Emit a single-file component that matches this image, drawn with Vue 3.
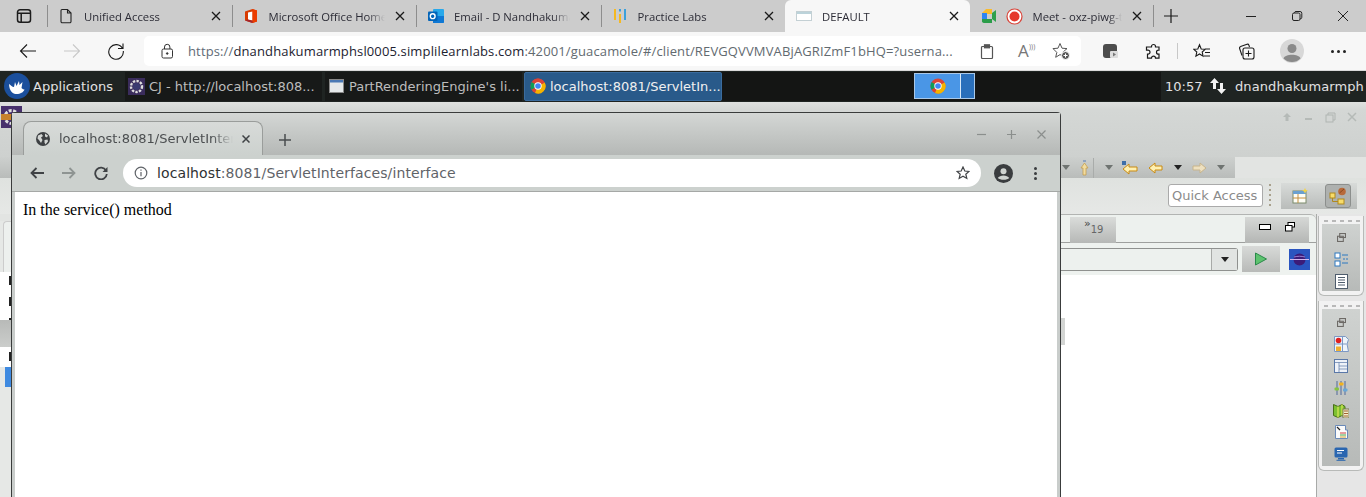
<script setup>
const edgeTabs = [
  { id: 'page', title: 'Unified Access' },
  { id: 'office', title: 'Microsoft Office Home' },
  { id: 'outlook', title: 'Email - D Nandhakumar' },
  { id: 'labs', title: 'Practice Labs' },
  { id: 'blank', title: 'DEFAULT', active: true },
  { id: 'meet', title: 'Meet - oxz-piwg-tqb' }
]
const sideIcons = ['restore', 'persons', 'table', 'sliders', 'map', 'tree', 'monitor']
</script>

<template>
  <div class="screen">
    <div class="edge-tabs">
      <div class="side-btn">
        <svg width="16" height="16" viewBox="0 0 16 16" fill="none" stroke="#1c1c1c" stroke-width="1.5"><rect x="1.5" y="1.8" width="13" height="12.4" rx="2.5"/><path d="M1.5 5.2h13M5.2 5.2v9" /></svg>
      </div>
      <div v-for="t in edgeTabs" :key="t.id" class="etab" :class="{ active: t.active, wide: t.id === 'meet' }">
        <svg v-if="t.id === 'page'" class="ticon" width="16" height="16" viewBox="0 0 16 16" fill="none" stroke="#222" stroke-width="1.1"><path d="M3 2.5a1 1 0 0 1 1-1h5.5L13 5v8.5a1.2 1.2 0 0 1-1.2 1.2H4.2A1.2 1.2 0 0 1 3 13.5zM9.5 1.5V5H13"/></svg>
        <svg v-else-if="t.id === 'office'" class="ticon" width="16" height="16" viewBox="0 0 16 16"><path d="M2 3.5 9.5 1 14 2.5v11L9.5 15 2 12.5z" fill="#d83b01"/><path d="M5 4.5 9.5 3.5v9L5 11.5z" fill="#fff"/><path d="M9.5 1 14 2.5v11L9.5 15z" fill="#eb3c00"/><path d="M2 12.5 9.5 15v-2.3L4.5 11.5z" fill="#a4262c"/></svg>
        <svg v-else-if="t.id === 'outlook'" class="ticon" width="17" height="16" viewBox="0 0 17 16"><rect x="6" y="1" width="11" height="14" rx="1" fill="#28a8ea"/><path d="M6 8h11v6a1 1 0 0 1-1 1H6z" fill="#0f78d4"/><rect x="1" y="3.5" width="9.5" height="9.5" rx="1" fill="#0364b8"/><circle cx="5.7" cy="8.2" r="2.4" fill="none" stroke="#fff" stroke-width="1.4"/></svg>
        <svg v-else-if="t.id === 'labs'" class="ticon" width="16" height="16" viewBox="0 0 16 16"><rect x="2" y="1" width="2" height="11" fill="#f5b921"/><rect x="7" y="6" width="2" height="9" fill="#f5b921"/><rect x="7" y="1" width="2" height="2.5" fill="#3aa0dc"/><rect x="12" y="1" width="2" height="11" fill="#3aa0dc"/></svg>
        <svg v-else-if="t.id === 'blank'" class="ticon" width="16" height="16" viewBox="0 0 16 16"><rect x="0.5" y="3.5" width="15" height="9" fill="#fff" stroke="#c4d0d4"/><rect x="1" y="4" width="14" height="2" fill="#bcd3da"/></svg>
        <template v-else>
          <svg class="ticon" width="16" height="16" viewBox="0 0 16 16"><path d="M1 5 5 1h6v5H1z" fill="#f9bb2e"/><path d="M1 5v6h5V5z" fill="#2e84f3"/><path d="M1 11v1.5A2 2 0 0 0 3 15h8v-4z" fill="#2b9d49"/><path d="M11 5l4-3v12l-4-3z" fill="#2fa04d"/></svg>
          <svg class="rec" width="17" height="17" viewBox="0 0 17 17"><circle cx="8.5" cy="8.5" r="7.5" fill="#fff" stroke="#d9453a" stroke-width="1.2"/><circle cx="8.5" cy="8.5" r="5" fill="#e5382c"/></svg>
        </template>
        <span class="ttitle">{{ t.title }}</span>
        <svg class="tclose" width="10" height="10" viewBox="0 0 10 10" stroke="#1a1a1a" stroke-width="1.3"><path d="M1 1l8 8M9 1l-8 8"/></svg>
      </div>
      <div class="plus">
        <svg width="16" height="16" viewBox="0 0 16 16" stroke="#1a1a1a" stroke-width="1.2"><path d="M8 1v14M1 8h14"/></svg>
      </div>
      <div class="win-ctrl">
        <svg width="12" height="12" viewBox="0 0 12 12" stroke="#222"><path d="M1 6.5h10"/></svg>
        <svg width="12" height="12" viewBox="0 0 12 12" fill="none" stroke="#222"><rect x="1.5" y="3" width="7.5" height="7.5" rx="1.5"/><path d="M3.5 3V2.7A1.5 1.5 0 0 1 5 1.5h4A1.8 1.8 0 0 1 10.8 3.3v4A1.5 1.5 0 0 1 9.3 8.8H9"/></svg>
        <svg width="12" height="12" viewBox="0 0 12 12" stroke="#222"><path d="M1 1l10 10M11 1 1 11"/></svg>
      </div>
    </div>

    <div class="edge-bar">
      <div class="nav">
        <svg width="18" height="16" viewBox="0 0 18 16" fill="none" stroke="#1a1a1a" stroke-width="1.1"><path d="M17 8H1.5M8 1.5 1.5 8 8 14.5"/></svg>
        <svg width="18" height="16" viewBox="0 0 18 16" fill="none" stroke="#c8c8c8" stroke-width="1.1"><path d="M1 8h15.5M10 1.5 16.5 8 10 14.5"/></svg>
        <svg width="18" height="18" viewBox="0 0 18 18" fill="none" stroke="#1a1a1a" stroke-width="1.1"><path d="M15.5 6.5A7.3 7.3 0 1 0 16.3 9M16 1.5v5h-5"/></svg>
      </div>
      <div class="omni">
        <svg width="14" height="16" viewBox="0 0 14 16" fill="none" stroke="#333"><rect x="2" y="6" width="10.5" height="9" rx="1.5"/><path d="M4.5 6V4a2.7 2.7 0 0 1 5.4 0v2"/><circle cx="7.2" cy="10.5" r="0.8" fill="#333"/></svg>
        <span class="url"><span class="g1">https://</span><span class="h1">dnandhakumarmphsl0005.simplilearnlabs.com</span>:42001/guacamole/#/client/REVGQVVMVABjAGRIZmF1bHQ=?userna...</span>
        <div class="omni-icons">
          <svg width="14" height="15" viewBox="0 0 14 15" fill="none" stroke="#555" stroke-width="1.2"><rect x="1.5" y="2.5" width="11" height="12" rx="1"/><rect x="4.5" y="0.8" width="5" height="3" fill="#555"/></svg>
          <span class="read">A<i>)))</i></span>
          <svg class="star-plus" width="18" height="18" viewBox="0 0 18 18" fill="none" stroke="#555"><path d="M8 1.5l2 4.7 5 .4-3.8 3.3 1.1 4.9L8 12.6l-4.3 2.7 1.1-4.9L1 6.6l5-.4z"/><circle cx="13.5" cy="13.5" r="4" fill="#555" stroke="#fff"/><path d="M13.5 11.5v4M11.5 13.5h4" stroke="#fff"/></svg>
        </div>
      </div>
      <div class="edge-tools">
        <svg width="16" height="16" viewBox="0 0 16 16"><rect x="1" y="1" width="14" height="14" rx="3" fill="#4d4d4d"/><rect x="8" y="8" width="8" height="7" rx="1" fill="#ddd"/><path d="M11 9.5v4l3-2z" fill="#777"/></svg>
        <svg class="gap-a" width="17" height="17" viewBox="0 0 17 17" fill="none" stroke="#1a1a1a" stroke-width="1.2"><path d="M6.5 3.5a2 2 0 0 1 4 0V4H14v3.2h-.5a2 2 0 0 0 0 4h.5v4H10.5a2 2 0 0 0-4 0H2.5v-4H3a2 2 0 0 0 0-4H1.5V4h5z"/></svg>
        <i class="tsep"></i>
        <svg class="gap-b" width="18" height="17" viewBox="0 0 18 17" fill="none" stroke="#1a1a1a" stroke-width="1.1"><path d="M6.5 1.8 8.2 6l4 .3-3 2.7.9 4.2L6.5 11l-3.6 2.2.9-4.2-3-2.7 4-.3zM12 6h5M12 9.5h5M11 13h6"/></svg>
        <svg class="gap-c" width="17" height="17" viewBox="0 0 17 17" fill="none" stroke="#1a1a1a" stroke-width="1.1"><path d="M4 12.5 1.6 5.5a1.5 1.5 0 0 1 1-1.900L9 1.300a1.5 1.5 0 0 1 1.9.9l.6 1.8"/><rect x="5" y="5" width="11" height="11" rx="2"/><path d="M10.5 7.5v6M7.5 10.5h6"/></svg>
        <svg class="gap-d" width="24" height="24" viewBox="0 0 24 24"><circle cx="12" cy="12" r="12" fill="#d8d8d8"/><circle cx="12" cy="9.5" r="4.5" fill="#8a8a8a"/><path d="M3.5 19.5c1.5-5 15.5-5 17 0A12 12 0 0 1 3.5 19.5z" fill="#8a8a8a"/></svg>
        <span class="dots"><i></i><i></i><i></i></span>
      </div>
    </div>

    <div class="panel">
      <div class="apps">
        <svg width="26" height="26" viewBox="0 0 26 26"><circle cx="13" cy="13" r="13" fill="#1b4f9c"/><path d="M5 11c2 1 3 3 5 3l1-5 1.5 4 2.500-5 .5 4 3-3-1 6c1 1 2 1.500 3 1.500-1 3-5 5-9 4.500-3-.4-6-3-6.500-9.500z" fill="#fff"/></svg>
        <span>Applications</span>
      </div>
      <div class="task task-a">
        <svg width="17" height="17" viewBox="0 0 17 17"><rect width="17" height="17" fill="#3a2c5c"/><circle cx="8.5" cy="8.5" r="5.5" fill="none" stroke="#ddd" stroke-width="2.4" stroke-dasharray="2.4 1.2"/><circle cx="8.5" cy="8.5" r="3.6" fill="#3a3a70"/></svg>
        <span>CJ - http://localhost:808...</span>
      </div>
      <div class="task task-b">
        <svg width="15" height="14" viewBox="0 0 15 14"><rect width="14" height="13" x="0.5" y="0.5" fill="#e5e8ea" stroke="#888"/><rect x="1" y="1" width="13" height="2.5" fill="#4a78b4"/></svg>
        <span>PartRenderingEngine's li...</span>
      </div>
      <div class="task task-c">
        <svg width="16" height="16" viewBox="0 0 16 16"><circle cx="8" cy="8" r="7.5" fill="#db4437"/><path d="M8 8 1.5 11.7A7.5 7.5 0 0 1 1.7 4z" fill="#0f9d58"/><path d="M8 8 14.7 4.6A7.5 7.5 0 0 1 5 15z" fill="#f4b400"/><path d="M8 8l6.7-3.4A7.5 7.5 0 0 0 3 2.5z" fill="#db4437"/><circle cx="8" cy="8" r="3.7" fill="#fff"/><circle cx="8" cy="8" r="2.8" fill="#4285f4"/></svg>
        <span>localhost:8081/ServletIn...</span>
      </div>
      <div class="dock-gap">
        <div class="switcher">
          <div class="sw-main">
            <svg width="16" height="16" viewBox="0 0 16 16"><circle cx="8" cy="8" r="7.5" fill="#db4437"/><path d="M8 8 1.5 11.7A7.5 7.5 0 0 1 1.7 4z" fill="#0f9d58"/><path d="M8 8 14.7 4.6A7.5 7.5 0 0 1 5 15z" fill="#f4b400"/><circle cx="8" cy="8" r="3.7" fill="#fff"/><circle cx="8" cy="8" r="2.8" fill="#4285f4"/></svg>
          </div>
          <div class="sw-side"></div>
        </div>
      </div>
      <div class="clock">10:57</div>
      <svg class="updown" width="18" height="18" viewBox="0 0 18 18" fill="#f2f2f2"><path d="M5.5 1 1 6h3v6h3V6h3zM12.5 17 8 12h3V6h3v6h3z"/></svg>
      <div class="user">dnandhakumarmph</div>
    </div>

    <div class="desktop">
      <div class="eclipse">
        <div class="ec-title">
          <svg width="10" height="10" viewBox="0 0 10 10" fill="#b5bab7"><path d="M5 1 1 5h2.5v4h3V5H9z"/></svg>
          <i class="ec-min"></i>
          <svg width="11" height="11" viewBox="0 0 11 11" fill="none" stroke="#b0b5b2"><rect x="1" y="3" width="7" height="7"/><path d="M3 3V1h7v7H8"/></svg>
          <svg width="10" height="10" viewBox="0 0 10 10" stroke="#b5bab7" stroke-width="1.5"><path d="M1 1l8 8M9 1 1 9"/></svg>
        </div>
        <div class="ec-tools">
          <i class="tri dim"></i>
          <svg class="gap0" width="9" height="16" viewBox="0 0 9 16"><path d="M4.5 3 8 8H6v7H3V8H1z" fill="#f1dca0" stroke="#c39a44" stroke-width="0.7"/><rect x="3" y="0" width="3" height="2" fill="#8fa4c0"/></svg>
          <i class="tool-sep"></i>
          <i class="tri dim gap1"></i>
          <svg class="gap2" width="16" height="14" viewBox="0 0 16 14"><path d="M1 8l6-5v3h8v4H7v3z" fill="#fff0b0" stroke="#c98a12"/><rect x="0" y="0" width="4" height="4" fill="#3d6ea8"/></svg>
          <svg class="gap3" width="15" height="12" viewBox="0 0 15 12"><path d="M1 6l6-5v3h7v4H7v3z" fill="#fff0b0" stroke="#c98a12"/></svg>
          <i class="tri gap4"></i>
          <svg class="gap5" width="15" height="12" viewBox="0 0 15 12"><path d="M14 6 8 1v3H1v4h7v3z" fill="#eee0bf" stroke="#c7b48c"/></svg>
          <i class="tri dim gap5"></i>
        </div>
        <div class="ec-quick">
          <div class="quick">Quick Access</div>
          <i class="grip"></i>
          <div class="persp">
            <span class="p-cell">
              <svg width="16" height="16" viewBox="0 0 16 16"><rect x="1" y="3" width="13" height="12" fill="#fdfdf5" stroke="#7a8a6a"/><rect x="1" y="3" width="13" height="3" fill="#6aa0d0"/><path d="M6 6v9M1 10h13" stroke="#c58f3e"/><path d="M13 0l1 2 2 .5-2 1-1 2-1-2-2-1 2-.5z" fill="#f3d34a"/></svg>
            </span>
            <span class="p-cell on">
              <svg width="18" height="18" viewBox="0 0 18 18" fill="none"><rect x="1" y="6" width="5" height="5" fill="#f7dc6b" stroke="#b08a1e"/><rect x="9" y="12" width="6" height="5" fill="#f7dc6b" stroke="#b08a1e"/><path d="M3.5 11v3.5H9" stroke="#b08a1e"/><circle cx="13" cy="4.5" r="3.8" fill="#b86a3a"/><path d="M10.5 6 15 2" stroke="#8a4a20"/></svg>
            </span>
          </div>
        </div>
        <div class="ec-body">
          <div class="ec-left">
            <div class="ec-pane-head">
              <div class="chev">»<sub>19</sub></div>
              <div class="pane-btns">
                <i class="pb-min"></i>
                <svg width="10" height="10" viewBox="0 0 10 10" fill="#fff" stroke="#000"><rect x="3" y="0.5" width="6.5" height="4.5"/><rect x="0.5" y="3.5" width="6.5" height="5.5"/></svg>
              </div>
            </div>
            <div class="ec-url">
              <div class="combo"><span class="combo-btn"><i class="tri dark"></i></span></div>
              <div class="run"><svg width="14" height="14" viewBox="0 0 14 14"><path d="M1.5 1v12l11-6z" fill="#5ec26f" stroke="#2a8a4a"/></svg></div>
              <div class="globe"><svg width="21" height="21" viewBox="0 0 21 21"><rect width="21" height="21" fill="#2a55c0"/><circle cx="10.5" cy="10.5" r="6" fill="#3c1c78"/><path d="M1 10.5h19" stroke="#d0b8f0"/><path d="M5 8c4-1 7-1 11 0" stroke="#9a80d0" fill="none"/></svg></div>
            </div>
            <div class="ec-white"><i class="smudge"></i></div>
          </div>
          <div class="ec-trim">
            <div class="stack s1">
              <div class="dash"></div>
              <div class="stack-in">
                <span class="cell"><svg width="9" height="9" viewBox="0 0 10 10" fill="none" stroke="#6d6a66" stroke-width="1.2"><rect x="3" y="0.6" width="6.4" height="4.4"/><rect x="0.6" y="3.6" width="6.4" height="5.8"/></svg></span>
                <span class="cell"><svg width="15" height="15" viewBox="0 0 15 15" fill="none" stroke="#2d78c0"><rect x="1" y="1" width="5" height="5" fill="#fff"/><rect x="1" y="9" width="5" height="5" fill="#fff"/><path d="M8 3h6M8 11h6M9 7h2M12 7h2"/></svg></span>
                <span class="cell"><svg width="13" height="15" viewBox="0 0 13 15" fill="#fff" stroke="#4e5c6c"><rect x="0.5" y="0.5" width="12" height="14"/><path d="M3 3.5h7M3 6h7M3 8.5h7M3 11h7"/></svg></span>
              </div>
            </div>
            <div class="stack s2">
              <div class="dash"></div>
              <div class="stack-in">
                <span v-for="s in sideIcons" :key="s" class="cell">
                  <svg v-if="s === 'restore'" width="9" height="9" viewBox="0 0 10 10" fill="none" stroke="#6d6a66" stroke-width="1.2"><rect x="3" y="0.6" width="6.4" height="4.4"/><rect x="0.6" y="3.6" width="6.4" height="5.8"/></svg>
                  <svg v-else-if="s === 'persons'" width="15" height="16" viewBox="0 0 15 16"><path d="M0.5 0.5h11l3 3-1.5 4.5 1.5 7.5H0.5z" fill="#eef4fa" stroke="#7c98c4"/><path d="M0.5 8h12M8.5 0.5v15" stroke="#7c98c4"/><circle cx="4.5" cy="4.5" r="2.8" fill="#e02020"/><rect x="2" y="10.5" width="5" height="4.5" fill="#f0b030"/></svg>
                  <svg v-else-if="s === 'table'" width="14" height="14" viewBox="0 0 14 14" fill="#eef2f8" stroke="#5a78a8"><rect x="0.5" y="0.5" width="13" height="13"/><path d="M0.5 3.5h13M5 3.5v10M5 7h8.5M5 10h8.5" stroke-width="0.7"/></svg>
                  <svg v-else-if="s === 'sliders'" width="14" height="14" viewBox="0 0 14 14"><path d="M3 0v14M7 0v14M11 0v14" stroke="#50689a"/><rect x="0.5" y="6.5" width="4.5" height="3" rx="1" fill="#86c440"/><rect x="5" y="1.5" width="4.5" height="3" rx="1" fill="#f2b21e"/><rect x="9" y="7.5" width="4.5" height="3" rx="1" fill="#68a8d8"/></svg>
                  <svg v-else-if="s === 'map'" width="16" height="15" viewBox="0 0 16 15"><path d="M0.5 1.5 5 3.5 9 1.5l3 2v11l-3-2-4 2-4.5-2z" fill="#7cc030" stroke="#486e18"/><path d="M5 3.5v11M9 1.5v11" stroke="#f0f060"/><rect x="10" y="6" width="6" height="9" fill="#f4f0d0" stroke="#7a7a50"/><path d="M11 8h4M11 10.5h4M11 13h4" stroke="#a06030"/></svg>
                  <svg v-else-if="s === 'tree'" width="13" height="14" viewBox="0 0 13 14"><path d="M0.5 0.5H10.5V5H12.5V13.5H0.5z" fill="#fbfbfb" stroke="#6a8ab8"/><path d="M2 2l3 3" stroke="#222" stroke-width="1.3"/><path d="M5 8h6" stroke="#d04040"/><path d="M5 10h6" stroke="#48a848"/><path d="M5 12h6" stroke="#d8a030"/></svg>
                  <svg v-else width="14" height="14" viewBox="0 0 14 14"><rect x="0.5" y="0.5" width="13" height="10" rx="1.5" fill="#2a66b0"/><path d="M3 3.5h7M3 6h5" stroke="#fff"/><rect x="4" y="11" width="6" height="1.5" fill="#2a66b0"/><rect x="2.5" y="12.8" width="9" height="1" fill="#2a66b0"/></svg>
                </span>
              </div>
            </div>
          </div>
        </div>
      </div>

      <svg class="bg-gear" width="21" height="22" viewBox="0 0 21 22"><rect width="21" height="22" fill="#47306c"/><circle cx="10.5" cy="11" r="6.5" fill="none" stroke="#e0e0e0" stroke-width="3" stroke-dasharray="3 1.5"/><rect x="0" y="8" width="11" height="6" fill="#c8822c"/></svg>
      <div class="left-strip">
        <i class="ls-tab"></i>
        <div class="ls-white"><i></i><i></i><i></i></div>
        <div class="ls-gray"></div>
        <div class="ls-white short"><i></i></div>
        <div class="ls-blue"></div>
      </div>

      <div class="chrome">
        <div class="c-strip">
          <div class="c-tab">
            <svg width="14" height="14" viewBox="0 0 14 14"><circle cx="7" cy="7" r="7" fill="#3d4043"/><path d="M2 3.5 5.5 2 7 4 5 5.5 6.5 8 5 11 3 8 1.5 6.5zM9 1.5l3 2-1 2-2-1zM8.5 8l3-.5.5 2-2.5 3-1-2z" fill="#d3d6d4"/></svg>
            <span class="c-title">localhost:8081/ServletInterfaces/interface</span>
            <svg width="8" height="8" viewBox="0 0 8 8" stroke="#3f4245" stroke-width="1.5"><path d="M0.5 0.5l7 7M7.5 0.5l-7 7"/></svg>
          </div>
          <svg class="c-plus" width="12" height="12" viewBox="0 0 12 12" stroke="#4a4d4f" stroke-width="1.5"><path d="M6 0v12M0 6h12"/></svg>
          <div class="c-win">
            <svg width="9" height="9" viewBox="0 0 9 9" stroke="#8b8f8d" stroke-width="1.2"><path d="M0 4.5h9"/></svg>
            <svg width="9" height="9" viewBox="0 0 9 9" stroke="#8b8f8d" stroke-width="1.2"><path d="M0 4.5h9M4.5 0v9"/></svg>
            <svg width="9" height="9" viewBox="0 0 9 9" stroke="#8b8f8d" stroke-width="1.2"><path d="M0.5 0.5l8 8M8.5 0.5l-8 8"/></svg>
          </div>
        </div>
        <div class="c-bar">
          <div class="c-nav">
            <svg width="14" height="12" viewBox="0 0 14 12" fill="none" stroke="#3f4245" stroke-width="1.8"><path d="M14 6H1.5M6.5 1 1.5 6l5 5"/></svg>
            <svg width="14" height="12" viewBox="0 0 14 12" fill="none" stroke="#8e9492" stroke-width="1.8"><path d="M0 6h12.5M7.5 1l5 5-5 5"/></svg>
            <svg width="14" height="14" viewBox="0 0 14 14" fill="none" stroke="#3f4245" stroke-width="1.8"><path d="M12 4.5A5.8 5.8 0 1 0 12.8 8"/><path d="M13.5 1v5h-5z" fill="#3f4245" stroke="none"/></svg>
          </div>
          <div class="c-omni">
            <svg width="14" height="14" viewBox="0 0 14 14" fill="none" stroke="#5f6368" stroke-width="1.2"><circle cx="7" cy="7" r="5.8"/><path d="M7 6v4.3M7 3.5v1.3"/></svg>
            <span class="c-url"><b>localhost</b>:8081/ServletInterfaces/interface</span>
            <svg class="c-star" width="14" height="14" viewBox="0 0 14 14" fill="none" stroke="#3f4245" stroke-width="1.2"><path d="M7 1l1.8 4 4.2.4-3.2 2.8 1 4.2L7 10.2l-3.8 2.2 1-4.2L1 5.4 5.2 5z"/></svg>
          </div>
          <svg class="c-avatar" width="19" height="19" viewBox="0 0 19 19"><circle cx="9.5" cy="9.5" r="9.5" fill="#3a3d3f"/><circle cx="9.5" cy="7.3" r="3" fill="#cfd4d1"/><path d="M3.8 14c2-3.4 9.4-3.4 11.4 0-2 2.4-9 2.4-11.4 0z" fill="#cfd4d1"/></svg>
          <span class="c-dots"><i></i><i></i><i></i></span>
        </div>
        <div class="c-page">In the service() method</div>
      </div>
    </div>
  </div>
</template>

<style>
html, body { margin: 0; background: #e4e6e4; overflow: hidden; }
</style>

<style scoped>
.screen { width: 1366px; height: 497px; overflow: hidden; display: flex; flex-direction: column; font-family: "Open Sans", "Noto Sans", sans-serif; }
svg { flex: none; display: block; }

.edge-tabs { height: 32px; background: #cccccc; display: flex; align-items: center; flex: none; }
.side-btn { width: 47px; display: flex; justify-content: center; }
.etab { width: 184.5px; height: 22px; box-sizing: border-box; padding: 0 8px 0 10px; border-left: 1px solid #8d8d8d; display: flex; align-items: center; gap: 10px; font-size: 11.3px; color: #2c2c36; position: relative; }
.etab.active { height: 32px; align-self: flex-end; background: #f7f7f7; border-left: 0; border-radius: 6px 6px 0 0; padding-left: 11px; }
.etab.active + .etab { border-left-color: transparent; }
.etab.wide .rec { margin-left: -1px; }
.etab.wide { gap: 10px; width: 183px; }
.ttitle { flex: 1; min-width: 0; white-space: nowrap; overflow: hidden; -webkit-mask-image: linear-gradient(to right, #000 85%, transparent 100%); mask-image: linear-gradient(to right, #000 85%, transparent 100%); }
.tclose { flex: none; margin-right: 3px; }
.plus { width: 36px; height: 22px; box-sizing: border-box; border-left: 1px solid #8d8d8d; display: flex; justify-content: center; align-items: center; }
.win-ctrl { margin-left: auto; display: flex; gap: 34px; padding-right: 17px; }

.edge-bar { height: 39px; background: #f7f7f7; display: flex; align-items: center; flex: none; border-bottom: 1px solid #dadada; box-sizing: border-box; }
.nav { width: 144px; box-sizing: border-box; padding-left: 19px; display: flex; gap: 26px; align-items: center; }
.omni { width: 937px; height: 30px; background: #fff; border-radius: 5px; display: flex; align-items: center; box-sizing: border-box; padding-left: 16px; position: relative; }
.url { margin-left: 14px; font-size: 13px; color: #626a70; white-space: nowrap; letter-spacing: 0.135px; }
.g1 { color: #5f6b76; }
.h1 { color: #1c2230; }
.omni-icons { margin-left: auto; display: flex; align-items: center; padding-right: 11px; }
.read { font-size: 17px; color: #777; display: inline-flex; width: 16px; position: relative; margin-left: 24px; line-height: 18px; }
.read i { font-size: 7px; font-style: normal; position: absolute; left: 11px; top: 0; line-height: 10px; }
.star-plus { margin-left: 18px; }
.edge-tools { flex: 1; display: flex; align-items: center; padding-left: 21px; position: relative; }
.gap-a { margin-left: 27px; }
.tsep { width: 1px; height: 16px; background: #c8c8c8; margin-left: 15px; }
.gap-b { margin-left: 15px; }
.gap-c { margin-left: 27px; }
.gap-d { margin-left: 25px; }
.dots { display: flex; gap: 3px; margin-left: 27px; }
.dots i { width: 3px; height: 3px; border-radius: 50%; background: #222; }

.panel { height: 31px; background: #1f2422; display: flex; align-items: center; flex: none; color: #e2e2e2; font-family: "DejaVu Sans", sans-serif; font-size: 13px; white-space: nowrap; box-sizing: border-box; padding-bottom: 1px; }
.apps { width: 124px; box-sizing: border-box; padding-left: 4px; display: flex; align-items: center; gap: 3px; letter-spacing: 0.05px; }
.task { height: 29px; display: flex; align-items: center; gap: 4px; box-sizing: border-box; background: #171918; color: #bdbdbd; }
.task-a { width: 197px; padding-left: 3px; margin-left: 1px; }
.task-b { width: 197px; padding-left: 4px; margin-left: 3px; gap: 5px; }
.task-c { width: 198px; padding-left: 5px; margin-left: 2px; background: #295a8a; color: #f0f0f0; border: 1px solid #3b6c9e; border-radius: 2px; }
.dock-gap { width: 439px; height: 29px; background: #141514; display: flex; padding-left: 192px; box-sizing: border-box; }
.switcher { width: 61px; height: 26px; display: flex; border: 1px solid #a9c8e8; box-sizing: border-box; background: #2a6fbb; margin-top: 1px; }
.sw-main { width: 45px; background: #4a96e6; border-right: 1px solid #d7e8f8; display: flex; align-items: center; justify-content: center; box-sizing: content-box; }
.sw-side { flex: 1; background: #2a6fbb; }
.clock { margin-left: 4px; width: 44px; }
.updown { margin-right: 8px; }
.user { letter-spacing: 0.1px; }

.desktop { flex: 1; position: relative; overflow: hidden; background: #e2e4e2; }
.eclipse { height: 100%; display: flex; flex-direction: column; }
.ec-title { height: 55px; flex: none; background: linear-gradient(#dfe1df 0, #d4d7d5 8px, #ced1cf 100%); display: flex; align-items: center; justify-content: flex-end; gap: 11px; padding: 0 9px 25px 0; box-sizing: border-box; }
.ec-min { width: 7px; height: 2px; background: #b5bab7; margin: 4px 2px 0 2px; }
.ec-tools { height: 21px; flex: none; width: 1235px; background: linear-gradient(#cdd0ce, #b9bcba); display: flex; align-items: center; justify-content: flex-end; box-sizing: border-box; padding-right: 10.5px; }
.tri { width: 0; height: 0; border-left: 4.5px solid transparent; border-right: 4.5px solid transparent; border-top: 5px solid #222; display: block; }
.tri.dim { border-top-color: #6f7471; }
.gap0 { margin-left: 10px; }
.tool-sep { width: 1px; height: 20px; background: #a9acaa; margin-left: 4px; }
.gap1 { margin-left: 11px; }
.gap2 { margin-left: 9.5px; }
.gap3 { margin-left: 9.5px; }
.gap4 { margin-left: 11px; }
.gap5 { margin-left: 10px; }
.ec-quick { height: 36px; flex: none; display: flex; align-items: center; justify-content: flex-end; background: linear-gradient(#dfe2df, #e6e8e6); padding-right: 9px; box-sizing: border-box; }
.quick { width: 95px; height: 23px; box-sizing: border-box; background: #fff; border: 1px solid #aaa; border-radius: 3px; font-family: "DejaVu Sans", sans-serif; font-size: 13px; color: #8b8b8b; line-height: 21px; padding-left: 3px; white-space: nowrap; margin-top: -1px; }
.grip { width: 2px; height: 24px; margin: 0 10px 0 6px; background: repeating-linear-gradient(#a8a08c 0 2px, transparent 2px 5px); }
.persp { width: 76px; height: 26px; background: linear-gradient(#d8dbd9, #b9bcba); display: flex; align-items: center; }
.p-cell { width: 38px; height: 100%; display: flex; align-items: center; justify-content: center; box-sizing: border-box; }
.p-cell.on { background: #aeb1af; border: 1px solid #8c8f8d; border-radius: 3px; margin-left: 6px; width: 26px; height: 24px; }

.ec-body { flex: 1; min-height: 0; display: flex; }
.ec-left { width: 1317px; display: flex; flex-direction: column; border-right: 1px solid #a8aaa8; box-sizing: border-box; }
.ec-pane-head { height: 29px; flex: none; margin-left: 1060px; background: #edf1ee; border-bottom: 1px solid #9ea09e; box-sizing: border-box; display: flex; justify-content: space-between; padding: 2px 7px 0 10px; border-top: 1px solid #b2b4b2; border-radius: 0 6px 0 0; }
.chev { width: 46px; height: 26px; background: linear-gradient(#dadcda, #b6b8b6); color: #444; font-size: 11px; font-family: "DejaVu Sans", sans-serif; padding: 0 0 0 14px; box-sizing: border-box; line-height: 14px; }
.chev sub { font-size: 10px; color: #666; vertical-align: -6px; line-height: 0; }
.pane-btns { width: 64px; height: 26px; background: linear-gradient(#d6d8d6, #b4b6b4); display: flex; align-items: center; gap: 14px; padding-left: 14px; box-sizing: border-box; padding-bottom: 6px; }
.pb-min { width: 10px; height: 4px; border: 1px solid #000; background: #fff; box-sizing: content-box; }
.ec-url { height: 32px; flex: none; background: #eef2ef; margin-left: 1060px; display: flex; align-items: center; box-sizing: border-box; }
.combo { width: 178px; height: 23px; box-sizing: border-box; border: 1px solid #8f918f; border-left: 0; border-radius: 0 3px 3px 0; background: #edf1ee; display: flex; justify-content: flex-end; }
.combo-btn { width: 25px; background: #e1e4e2; border-left: 1px solid #a8aaa8; display: flex; align-items: center; justify-content: center; }
.run { width: 38px; height: 26px; margin-left: 4px; background: linear-gradient(#d8dad8, #b8bab8); display: flex; align-items: center; justify-content: center; }
.globe { margin-left: 9px; }
.ec-white { flex: 1; background: #fff; position: relative; }
.smudge { position: absolute; left: 1061px; top: 43px; width: 4px; height: 27px; background: #d3d5d3; }
.ec-trim { width: 49px; flex: none; background: #e6e6e6; display: flex; flex-direction: column; align-items: flex-end; gap: 5px; padding: 2px 2px 0 0; box-sizing: border-box; }
.stack { width: 46px; box-sizing: border-box; border: 1px solid #b8bab8; border-top: 0; border-radius: 0 0 6px 6px; padding: 0 3px 3px; background: #f2f2f2; }
.s1 { height: 80px; }
.s2 { height: 170px; }
.dash { height: 8px; background: repeating-linear-gradient(90deg, transparent 0 2px, #b8b8b8 2px 6px, transparent 6px 8px); background-size: 100% 2px; background-repeat: no-repeat; background-position: 0 4px; }
.stack-in { height: calc(100% - 9px); background: linear-gradient(#cfd2d0, #b7bab8); display: flex; flex-direction: column; align-items: center; padding-top: 2px; box-sizing: border-box; }
.cell { height: 22px; flex: none; display: flex; align-items: center; justify-content: center; }

.bg-gear { position: absolute; left: 1px; top: 4px; }
.left-strip { position: absolute; left: 0; top: 119px; width: 11px; height: 276px; background: #e6e8e6; display: flex; flex-direction: column; }
.ls-tab { height: 50px; flex: none; border-top: 1px solid #ccc; border-left: 1px solid #ccc; border-radius: 4px 0 0 0; margin-left: 3px; background: #edf0ee; }
.ls-white { height: 48px; background: #fff; display: flex; flex-direction: column; gap: 12px; align-items: flex-end; padding-top: 4px; box-sizing: border-box; overflow: hidden; }
.ls-white.short { height: 20px; padding-top: 5px; }
.ls-white i { width: 2px; height: 9px; background: #222; flex: none; }
.ls-gray { height: 27px; background: linear-gradient(#b8bab8, #cbcdcb); }
.ls-blue { height: 20px; margin-left: 5px; background: #3f8ae0; }

.chrome { position: absolute; left: 11px; top: 10px; width: 1050px; height: 400px; box-sizing: border-box; border: 1px solid #3a3c3c; border-bottom: 0; border-radius: 4px 4px 0 0; background: #c9cdcb; display: flex; flex-direction: column; }
.c-strip { height: 42px; flex: none; background: linear-gradient(#d4d7d5, #b5b8b6); display: flex; align-items: flex-end; padding-left: 11px; box-sizing: border-box; }
.c-tab { width: 240px; height: 34px; background: linear-gradient(#d8dbd9, #ccd1ce); box-sizing: border-box; border: 1px solid #9a9d9b; border-bottom: 0; border-radius: 8px 8px 0 0; display: flex; align-items: center; padding: 0 12px; gap: 9px; font: 13px "DejaVu Sans", sans-serif; color: #4b4e50; }
.c-title { flex: 1; min-width: 0; white-space: nowrap; overflow: hidden; -webkit-mask-image: linear-gradient(to right, #000 88%, transparent 100%); mask-image: linear-gradient(to right, #000 88%, transparent 100%); }
.c-plus { margin: 0 0 9px 16px; }
.c-win { margin-left: auto; align-self: flex-start; display: flex; gap: 21px; padding: 17px 14.5px 0 0; }
.c-bar { height: 37px; flex: none; background: #ccd1ce; border-bottom: 1px solid #a5a8a6; box-sizing: border-box; display: flex; align-items: center; padding-left: 18px; }
.c-nav { width: 93px; display: flex; align-items: center; gap: 18px; }
.c-omni { width: 858px; height: 28px; border-radius: 14px; background: #fff; display: flex; align-items: center; padding: 0 11px 0 11px; box-sizing: border-box; }
.c-url { font: 14px "DejaVu Sans", sans-serif; color: #5f6368; margin-left: 9px; white-space: nowrap; letter-spacing: 0.1px; }
.c-url b { font-weight: 400; color: #2e3133; }
.c-star { margin-left: auto; }
.c-avatar { margin-left: 13px; }
.c-dots { display: flex; flex-direction: column; gap: 2px; margin-left: 21px; }
.c-dots i { width: 3px; height: 3px; border-radius: 50%; background: #3a3d3f; }
.c-page { flex: 1; margin: 0 3px; background: #fff; font: 16px/18px "Liberation Serif", serif; color: #000; padding: 9px 8px; }
</style>
